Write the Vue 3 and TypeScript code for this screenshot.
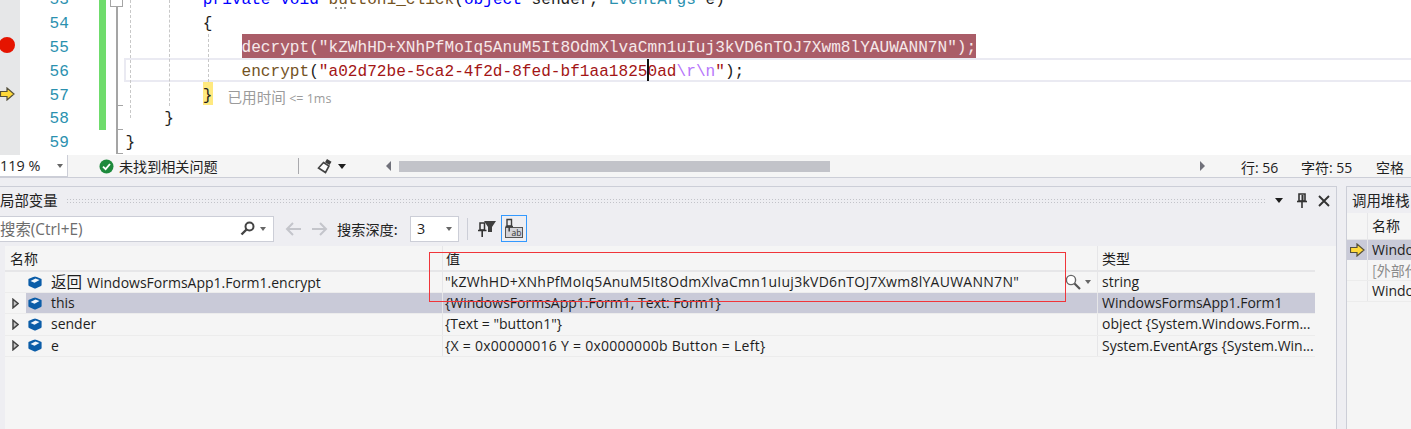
<script setup lang="ts">
interface Row { name: string; value: string; type: string; selected?: boolean; expand: boolean; prefix?: string; wide?: boolean }
const rows: Row[] = [
  { prefix: '返回', name: 'WindowsFormsApp1.Form1.encrypt', value: '"kZWhHD+XNhPfMoIq5AnuM5It8OdmXlvaCmn1uIuj3kVD6nTOJ7Xwm8lYAUWANN7N"', type: 'string', expand: false, wide: true },
  { name: 'this', value: '{WindowsFormsApp1.Form1, Text: Form1}', type: 'WindowsFormsApp1.Form1', selected: true, expand: true },
  { name: 'sender', value: '{Text = "button1"}', type: 'object {System.Windows.Form...', expand: true },
  { name: 'e', value: '{X = 0x00000016 Y = 0x0000000b Button = Left}', type: 'System.EventArgs {System.Win...', expand: true, wide: true },
]
const lineNumbers = [53, 54, 55, 56, 57, 58, 59]
</script>

<template>
  <div class="app">
    <section class="editor">
      <div class="margin">
        <svg class="bp" width="16" height="16" viewBox="0 0 16 16"><circle cx="8" cy="8" r="8" fill="#e51400" /></svg>
        <svg class="cur" width="15" height="14" viewBox="0 0 15 14"><path d="M0.5 4.5H7V1L14 7L7 13V9.5H0.5Z" fill="#ffd939" stroke="#55503a" stroke-width="1.2" /></svg>
      </div>
      <div class="nums"><div v-for="n in lineNumbers" :key="n" class="num">{{ n }}</div></div>
      <div class="changes"><div class="green"></div></div>
      <div class="fold">
        <div class="fold-box"></div>
        <div class="fold-line"></div>
        <div class="tick t1"></div>
        <div class="tick t2"></div>
        <div class="tick t3"></div>
      </div>
      <div class="code">
        <div class="ln in8"><span class="kw">private void</span> <span class="me">button1_click</span>(<span class="kw">object</span> sender, <span class="ty">EventArgs</span> e)</div>
        <div class="ln in8">{</div>
        <div class="ln in12"><span class="sel">decrypt("kZWhHD+XNhPfMoIq5AnuM5It8OdmXlvaCmn1uIuj3kVD6nTOJ7Xwm8lYAUWANN7N");</span></div>
        <div class="ln in12"><span class="me">encrypt</span>(<span class="st">"a02d72be-5ca2-4f2d-8fed-bf1aa1825<span class="caret"></span>0ad</span><span class="es">\r\n</span><span class="st">"</span>);</div>
        <div class="ln in8"><span class="brace">}</span><span class="perf"><span class="perf-cjk">已用时间</span> &lt;= 1ms</span></div>
        <div class="ln in4">}</div>
        <div class="ln">}</div>
      </div>
      <div class="current"></div>
      <i class="guide g1"></i><i class="guide g2"></i><i class="guide g3"></i>
      <div class="dots"></div>
    </section>

    <footer class="status">
      <div class="zoom">119 %<span class="tri tri-gray"></span></div>
      <div class="health">
        <svg width="15" height="15" viewBox="0 0 15 15"><circle cx="7.5" cy="7.5" r="7" fill="#1d8a3c" /><path d="M4 7.6L6.6 10.2L11 5" fill="none" stroke="#fff" stroke-width="1.8" /></svg>
        <span>未找到相关问题</span>
      </div>
      <div class="vsep"></div>
      <div class="brush">
        <svg width="16" height="16" viewBox="0 0 16 16"><path d="M10 1L14.5 3.8L12.5 7L8 4.2Z" fill="#3d3d3d" /><path d="M6.5 4.5L12 8L8.5 14.5L1.5 10Z" fill="#fff" stroke="#444" stroke-width="1.6" /></svg>
        <span class="tri"></span>
      </div>
      <div class="hscroll">
        <span class="arrow-l"></span>
        <div class="track"><div class="thumb"></div></div>
        <span class="arrow-r"></span>
      </div>
      <div class="pos p1">行: 56</div>
      <div class="pos p2">字符: 55</div>
      <div class="pos p3">空格</div>
    </footer>

    <main class="dock">
      <section class="locals">
        <header class="title">
          <span class="title-text">局部变量</span>
          <div class="grip"></div>
          <span class="tri"></span>
          <svg class="pin" width="12" height="15" viewBox="0 0 12 15"><path d="M3 1H9V8H3Z" fill="none" stroke="#333" stroke-width="1.6" /><path d="M6.5 2V8" stroke="#333" stroke-width="2" /><path d="M1 8.5H11" stroke="#333" stroke-width="1.6" /><path d="M6 9V15" stroke="#333" stroke-width="1.6" /></svg>
          <svg class="close" width="12" height="12" viewBox="0 0 12 12"><path d="M1 1L11 11M11 1L1 11" stroke="#333" stroke-width="1.9" /></svg>
        </header>
        <div class="tools">
          <div class="search">
            <span class="ph">搜索(Ctrl+E)</span>
            <svg class="mag" width="15" height="15" viewBox="0 0 15 15"><circle cx="9.5" cy="5.5" r="4" fill="none" stroke="#444" stroke-width="2" /><path d="M6.5 8.5L1.5 13.5" stroke="#444" stroke-width="2.4" /></svg>
            <span class="tri tri-gray"></span>
          </div>
          <svg class="nav" width="17" height="14" viewBox="0 0 17 14"><path d="M16 7H2M8 1L2 7L8 13" fill="none" stroke="#c4c5cb" stroke-width="2" /></svg>
          <svg class="nav nav2" width="17" height="14" viewBox="0 0 17 14"><path d="M1 7H15M9 1L15 7L9 13" fill="none" stroke="#c4c5cb" stroke-width="2" /></svg>
          <span class="depth">搜索深度:</span>
          <div class="select"><span>3</span><span class="tri tri-gray"></span></div>
          <div class="vsep2"></div>
          <svg class="filter" width="20" height="18" viewBox="0 0 20 18"><path d="M7 1H19L15 7V12H11V7Z" fill="#3f3f3f" /><path d="M3 3H7.5V10H3Z" fill="#eeeef2" stroke="#333" stroke-width="1.5" /><path d="M1 10.5H9.5M5.2 11V17" fill="none" stroke="#333" stroke-width="1.6" /></svg>
          <div class="tab-btn">
            <svg width="22" height="22" viewBox="0 0 22 22"><rect x="2.5" y="9.5" width="17" height="10" fill="#d3d3d9" stroke="#555" /><path d="M4 1.5H8.5V8H4Z" fill="#eeeef2" stroke="#3f3f3f" stroke-width="1.4" /><path d="M2.5 8.5H10M6.2 9V13.5" fill="none" stroke="#3f3f3f" stroke-width="1.5" /><text class="ab" x="8.5" y="17.5">ab</text></svg>
          </div>
        </div>
        <div class="table">
          <div class="row head">
            <div class="c1">名称</div><div class="c2">值</div><div class="c3">类型</div>
          </div>
          <div v-for="r in rows" :key="r.name" class="row" :class="{ selected: r.selected }">
            <div class="c1">
              <svg class="exp" width="7" height="11" viewBox="0 0 7 11"><path v-if="r.expand" d="M1 1.2L6 5.5L1 9.8Z" fill="#c8c8c8" stroke="#444" stroke-width="1.5" /></svg>
              <svg class="cube" width="14" height="13" viewBox="0 0 14 13"><path d="M7 0.5Q7.6 0.5 13 2.8Q13.6 3 13.6 3.6V9Q13.6 9.6 13 9.9L7.5 12.4Q7 12.6 6.5 12.4L1 9.9Q0.4 9.6 0.4 9V3.6Q0.4 3 1 2.8Q6.4 0.5 7 0.5Z" fill="#0b5da8" /><path d="M2.5 5L7.5 2.4L11.5 4L6.5 6.8Z" fill="#f2f7fc" /></svg>
              <span class="name"><span v-if="r.prefix" class="cjk">{{ r.prefix }}</span>{{ r.name }}</span>
            </div>
            <div class="c2">
              <span :class="{ wide: r.wide }">{{ r.value }}</span>
              <span v-if="r.prefix" class="viz">
                <svg width="16" height="16" viewBox="0 0 16 16"><circle cx="6" cy="6" r="4.6" fill="#fff" stroke="#666" stroke-width="1.4" /><path d="M9.5 9.5L15 15" stroke="#555" stroke-width="2.2" /></svg>
                <span class="tri tri-gray"></span>
              </span>
            </div>
            <div class="c3">{{ r.type }}</div>
          </div>
        </div>
      </section>

      <section class="stack">
        <header class="stack-title">调用堆栈</header>
        <div class="stack-head"><div class="sg"></div><div class="st1">名称</div></div>
        <div class="srow active">
          <div class="sg"><svg width="15" height="14" viewBox="0 0 15 14"><path d="M0.5 4.5H7V1L14 7L7 13V9.5H0.5Z" fill="#ffd939" stroke="#55503a" stroke-width="1.2" /></svg></div>
          <div class="st1">Windows</div>
        </div>
        <div class="srow"><div class="sg"></div><div class="st1 ext">[外部代码]</div></div>
        <div class="srow"><div class="sg"></div><div class="st1">Windows</div></div>
      </section>

      <div class="mark"></div>
    </main>
  </div>
</template>

<style>
html, body { margin: 0; padding: 0; background: #fff; overflow: hidden; }
</style>

<style scoped>
.app { width: 1411px; height: 429px; overflow: hidden; display: flex; flex-direction: column; font-family: "Open Sans", "Noto Sans CJK SC", sans-serif; color: #1e1e1e; }

.editor { position: relative; height: 155px; flex: none; display: flex; background: #fff; overflow: hidden; font-family: "Liberation Mono", monospace; font-size: 16.12px; }
.margin { width: 20px; flex: none; background: #e6e7e8; position: relative; }
.bp { position: absolute; left: -1px; top: 37px; }
.cur { position: absolute; left: 0; top: 87px; }
.nums { width: 79px; flex: none; box-sizing: border-box; padding-left: 29.5px; margin-top: -13.7px; color: #2b91af; }
.num { height: 23.83px; line-height: 29px; }
.changes { width: 7px; flex: none; }
.green { height: 130px; background: #6fdc6c; }
.fold { width: 19.5px; flex: none; position: relative; }
.fold-box { position: absolute; left: 4px; top: -6px; width: 11px; height: 11px; border: 1px solid #a5a5a5; background: #fff; }
.fold-line { position: absolute; left: 10px; top: 6px; width: 2px; height: 148px; background: #a5a5a5; }
.tick { position: absolute; left: 11px; width: 6px; height: 1px; background: #a5a5a5; }
.t1 { top: 105px; } .t2 { top: 129px; } .t3 { top: 153px; }
.code { flex: 1; margin-top: -13.7px; position: relative; z-index: 1; color: #1e1e1e; }
.ln { height: 23.83px; line-height: 29px; white-space: pre; }
.in4 { padding-left: 4ch; } .in8 { padding-left: 8ch; } .in12 { padding-left: 12ch; }
.kw { color: #0000ff; } .me { color: #74531f; } .ty { color: #2b91af; } .st { color: #a31515; position: relative; } .es { color: #b776fb; }
.sel { display: inline-block; height: 24px; background: #aa5d68; color: #f6e9ea; vertical-align: top; }
.caret { position: relative; display: inline-block; width: 0; height: 0; }
.caret::after { content: ""; position: absolute; left: -0.5px; top: -17px; width: 2px; height: 22px; background: #111; }
.brace { display: inline-block; background: #ffe97f; height: 23.8px; vertical-align: top; }
.perf { font-family: "Open Sans", sans-serif; font-size: 12.5px; color: #9b9b9b; margin-left: 15px; }
.perf-cjk { font-family: "Noto Sans CJK SC", sans-serif; font-size: 14.6px; }
.current { position: absolute; left: 124px; right: -4px; top: 58px; height: 20px; border: 2px solid #eaeaf2; }
.guide { position: absolute; width: 0; border-left: 1px dashed #c8c8c8; }
.g1 { left: 130px; top: 0; height: 118px; } .g2 { left: 169px; top: 0; height: 106px; } .g3 { left: 208px; top: 34px; height: 48px; }
.dots { position: absolute; left: 335px; top: 7px; width: 11px; border-top: 2px dotted #9a9a9a; }

.status { height: 22px; flex: none; display: flex; align-items: center; background: #f5f5f5; font-size: 13px; position: relative; }
.zoom { width: 68px; height: 22px; box-sizing: border-box; background: #fff; border-right: 1px solid #ccced7; border-bottom: 1px solid #ccced7; display: flex; align-items: center; justify-content: space-between; padding-right: 4px; font-size: 14.4px; }
.tri { display: inline-block; width: 0; height: 0; border-left: 4.5px solid transparent; border-right: 4.5px solid transparent; border-top: 5px solid #1e1e1e; flex: none; }
.tri-gray { border-left-width: 3.5px; border-right-width: 3.5px; border-top: 4px solid #666; }
.health { display: flex; align-items: center; gap: 5px; margin-left: 31px; color: #222; font-family: "Noto Sans CJK SC", sans-serif; font-size: 14.1px; line-height: 22px; }
.vsep { width: 1px; height: 16px; background: #a9a9ad; margin-left: 80px; }
.brush { display: flex; align-items: center; gap: 5px; margin-left: 18px; width: 35px; }
.hscroll { display: flex; align-items: center; margin-left: 34px; height: 22px; }
.arrow-l, .arrow-r { width: 0; height: 0; border-top: 5px solid transparent; border-bottom: 5px solid transparent; flex: none; }
.arrow-l { border-right: 5px solid #70717a; margin-right: 8px; }
.arrow-r { border-left: 5px solid #70717a; }
.track { width: 801px; }
.thumb { width: 431px; height: 11px; background: #c2c3c9; }
.pos { position: absolute; top: 2px; line-height: 22px; font-size: 14px; }
.p1 { left: 1241px; } .p2 { left: 1301px; } .p3 { left: 1376px; }

.dock { flex: 1; position: relative; display: flex; background: #eeeef2; border-top: 1px solid #ccced7; padding-top: 8px; gap: 9px; min-height: 0; }
.locals { width: 1337px; flex: none; border-top: 1px solid #ccced7; border-right: 1px solid #ccced7; box-sizing: border-box; display: flex; flex-direction: column; }
.title { height: 27px; flex: none; display: flex; align-items: center; font-family: "Noto Sans CJK SC", sans-serif; font-size: 14.4px; line-height: 26px; }
.title-text { width: 58px; color: #222; white-space: nowrap; margin-top: -2px; }
.grip { margin-left: 8px; width: 1199px; height: 6px; background-image: radial-gradient(#c2c3c9 0.7px, transparent 0.8px); background-size: 3px 3px; }
.title .tri { margin-left: 10px; }
.pin { margin-left: 13px; }
.close { margin-left: 10px; }
.tools { height: 29px; flex: none; display: flex; align-items: center; }
.search { width: 274px; height: 26px; box-sizing: border-box; border: 1px solid #ccced7; border-left: 0; background: #fff; display: flex; align-items: center; }
.ph { font-size: 15.4px; color: #6d6d6d; width: 240px; white-space: nowrap; }
.search .tri { margin-left: 5px; }
.nav { margin-left: 11px; } .nav2 { margin-left: 9px; }
.depth { margin-left: 9px; font-family: "Noto Sans CJK SC", sans-serif; font-size: 14.2px; width: 73px; white-space: nowrap; color: #222; }
.select { width: 49px; height: 26px; box-sizing: border-box; background: #fff; border: 1px solid #ccced7; display: flex; align-items: center; justify-content: space-between; padding: 0 6px 0 6px; font-size: 14.4px; }
.vsep2 { width: 1px; height: 22px; background: #ccced7; margin-left: 8px; }
.filter { margin-left: 9px; }
.tab-btn { width: 26px; height: 27px; box-sizing: border-box; border: 1px solid #3399ff; margin-left: 4px; display: flex; align-items: center; justify-content: center; }
.ab { font-family: "Open Sans", sans-serif; font-size: 8.5px; fill: #333; }
.table { flex: 1; margin-left: 5px; margin-top: 3px; background: #f5f5f5; font-size: 14px; }
.row { display: grid; grid-template-columns: 437px 655px 218px; height: 21.2px; width: 1310px; line-height: 20px; border-bottom: 1px solid #ececec; box-sizing: border-box; }
.head { height: 26px; line-height: 24px; border-bottom: 2px solid #e6e6e8; font-family: "Noto Sans CJK SC", sans-serif; font-size: 14px; }
.head .c1 { padding-left: 5px; }
.head .c3 { padding-left: 4px; }
.c1, .c2, .c3 { box-sizing: border-box; white-space: nowrap; overflow: hidden; }
.c1 { display: flex; align-items: center; position: relative; }
.c2 { border-left: 1px solid #e6e6e8; padding-left: 2px; display: flex; justify-content: space-between; align-items: center; }
.head .c2 { padding-left: 3px; }
.wide { letter-spacing: 0.27px; }
.c3 { border-left: 1px solid #e6e6e8; padding-left: 4px; }
.selected .c1 { background: linear-gradient(to right, transparent 21px, #c9cad8 21px); }
.selected .c2, .selected .c3 { background: #c9cad8; }
.exp { margin-left: 7px; flex: none; }
.cube { margin-left: 9px; flex: none; }
.name { margin-left: 9px; }
.cjk { font-family: "Noto Sans CJK SC", sans-serif; font-size: 15.5px; margin-right: 5px; }
.viz { display: flex; align-items: center; gap: 4px; padding-right: 6px; }

.stack { flex: 1; border-top: 1px solid #ccced7; border-left: 1px solid #ccced7; display: flex; flex-direction: column; font-size: 14px; }
.stack-title { height: 26px; line-height: 26px; padding-left: 5px; font-family: "Noto Sans CJK SC", sans-serif; font-size: 14.4px; white-space: nowrap; color: #222; }
.stack-head { display: flex; height: 27px; background: #f5f5f5; line-height: 24px; font-family: "Noto Sans CJK SC", sans-serif; border-bottom: 1px solid #e6e6e8; box-sizing: border-box; }
.sg { width: 20px; flex: none; border-right: 1px solid #e6e6e8; display: flex; align-items: center; justify-content: center; }
.st1 { padding-left: 4px; white-space: nowrap; }
.srow { display: flex; height: 21px; line-height: 20px; background: #f5f5f5; border-bottom: 1px solid #ececec; box-sizing: border-box; }
.active { background: #c9cad8; border-bottom: 0; height: 20px; }
.ext { color: #8b8b8b; font-family: "Noto Sans CJK SC", sans-serif; }
.stack::after { content: ""; flex: 1; background: #f5f5f5; }

.mark { position: absolute; left: 429px; top: 74px; width: 635px; height: 48px; border: 1px solid #f0353a; pointer-events: none; }
</style>
